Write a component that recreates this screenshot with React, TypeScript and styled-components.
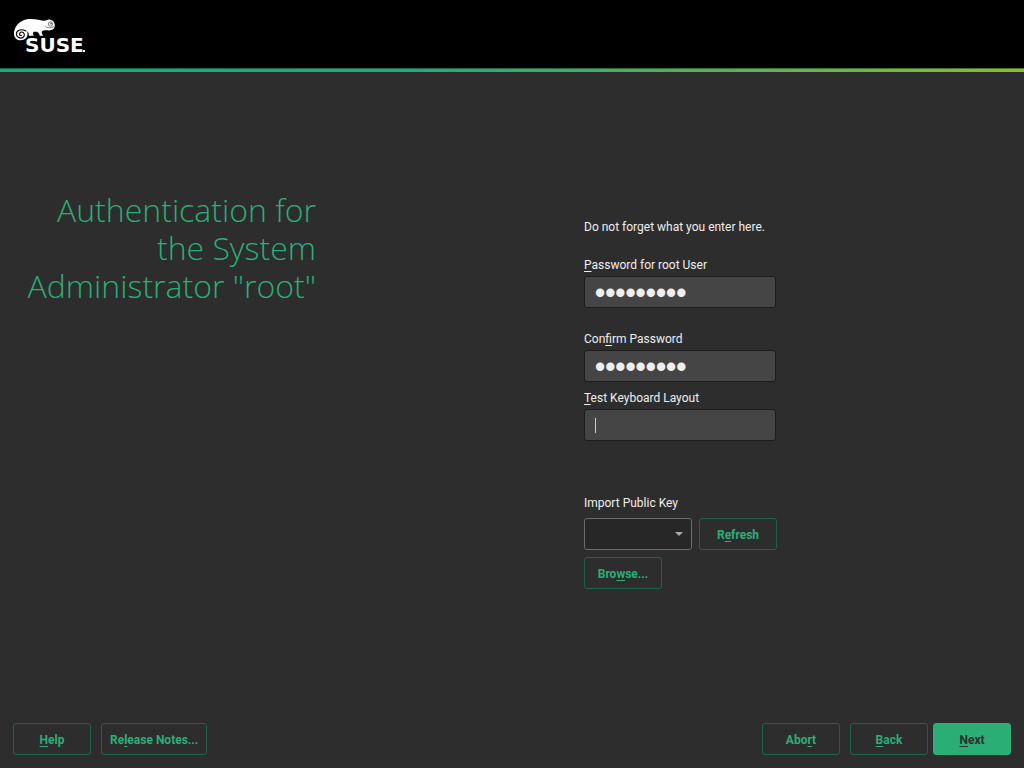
import React from "react";
import styled, { createGlobalStyle, css } from "styled-components";

const GlobalStyle = createGlobalStyle`
  *, *::before, *::after { box-sizing: border-box; }
  body {
    margin: 0;
    background: #2d2d2d;
    color: #eeeeee;
    font-family: Roboto, "Liberation Sans", sans-serif;
    font-size: 12px;
    line-height: 16px;
  }
`;

const Page = styled.div`
  display: flex;
  flex-direction: column;
  min-height: 100vh;
`;

const Header = styled.header`
  background: #000000;
  padding: 16px 12px 12px;
`;

const Logo = styled.svg`
  display: block;
  width: 80px;
  height: 40px;
`;

const Wordmark = styled.text`
  font: bold 20px "DejaVu Sans", sans-serif;
  fill: #ffffff;
`;

const Stripe = styled.div`
  height: 4px;
  border-top: 1px solid rgba(0, 0, 0, 0.4);
  background: linear-gradient(to right, #1fa67a 0%, #22a97c 40%, #84bf30 100%) border-box;
`;

const Main = styled.main`
  flex: 1;
  display: grid;
  grid-template-columns: minmax(300px, 336px) 1fr;
`;

const Title = styled.h1`
  margin: 0;
  padding: 119px 20px 0 24px;
  color: #2bae76;
  font: 350 32px/38px "Open Sans", Lato, sans-serif;
  font-variant-ligatures: none;
  text-align: right;
`;

const Form = styled.form`
  justify-self: center;
  width: 192px;
  padding-top: 147px;
`;

const Intro = styled.p`
  margin: 0 0 22px;
`;

const Field = styled.div<{ $gap: number }>`
  display: flex;
  flex-direction: column;
  gap: 3px;
  margin-bottom: ${({ $gap }) => $gap}px;
`;

const Hotkey = styled.span`
  text-decoration: underline;
  text-decoration-thickness: 1px;
  text-decoration-skip-ink: none;
  text-underline-offset: 2px;
`;

const InputFrame = styled.div<{ $caret?: boolean }>`
  position: relative;
  display: flex;
  ${({ $caret }) =>
    $caret &&
    css`
      &::after {
        content: "";
        position: absolute;
        left: 11px;
        top: 9px;
        width: 1px;
        height: 15px;
        background: #cccccc;
      }
    `}
`;

const TextInput = styled.input`
  width: 100%;
  height: 32px;
  padding: 0 10px;
  border: 1px solid #1c1c1c;
  border-radius: 3px;
  outline: none;
  background: #454545;
  color: #eeeeee;
  caret-color: transparent;
  font: 12px Roboto, sans-serif;

  &[type="password"] {
    padding-top: 2px;
    font: bold 29px "Liberation Sans", sans-serif;
  }
`;

const KeyRow = styled.div`
  display: flex;
  gap: 7px;
  margin: 7px 0;
`;

const SelectFrame = styled.div`
  position: relative;
  flex: none;
  width: 108px;

  &::after {
    content: "";
    position: absolute;
    right: 9px;
    top: 14px;
    border: 4px solid transparent;
    border-top-color: #aaaaaa;
    border-bottom: 0;
    pointer-events: none;
  }
`;

const Select = styled.select`
  appearance: none;
  display: block;
  width: 100%;
  height: 32px;
  padding: 0 24px 0 10px;
  border: 1px solid #6c6c6c;
  border-radius: 3px;
  outline: none;
  background: #272727;
  color: #eeeeee;
  font: 12px Roboto, sans-serif;
`;

const Button = styled.button<{ $primary?: boolean }>`
  flex: none;
  min-width: 78px;
  height: 32px;
  padding: 2px 8px 0;
  border: 1px solid ${({ $primary }) => ($primary ? "#2bae76" : "#1c6349")};
  border-radius: 3px;
  background: ${({ $primary }) => ($primary ? "#2bae76" : "transparent")};
  color: ${({ $primary }) => ($primary ? "#2d2d2d" : "#2bae76")};
  font: bold 12px/16px Roboto, sans-serif;
`;

const Footer = styled.footer`
  display: flex;
  justify-content: space-between;
  padding: 13px;
`;

const Group = styled.div<{ $gap: number }>`
  display: flex;
  gap: ${({ $gap }) => $gap}px;
`;

const SuseLogo = () => (
  <Logo viewBox="12 16 80 40" role="img" aria-label="SUSE">
    <path
      fill="#fff"
      d="M14 34C13.800 27 19 20.500 27 19.200C34 18.200 40 20.200 44.500 20.800C46.500 20.600 47.500 19.300 49.500 19.600C53 20.200 54.600 22 54.800 25C55 28.500 52.500 30.400 49 30.400C46 30.400 43.500 30 41.900 31.500C41.300 32.500 42 34 43.200 35.800L39.800 35.800C39.300 34 38.500 32.500 37 31.800L33.500 31.800C32.800 33 33 34 33.700 35.800L28.800 35.800C29 33.500 28.300 31.800 27 31.600C28.300 34.500 27.300 38 24 39.600C19.500 41.500 14.300 39.500 14 34Z"
    />
    <path
      fill="none"
      stroke="#000"
      strokeWidth="1.100"
      strokeLinecap="round"
      d="M26 31C20 28 16.300 31 16.400 34.300C16.700 38 22 39.400 24 36.400C25.300 33.800 22.800 31.200 20.600 32.200C18.800 33.200 19.300 35.900 21.300 35.400"
    />
    <circle cx="50.500" cy="24" r="2.200" fill="#fff" stroke="#000" strokeWidth="0.500" />
    <circle cx="51" cy="23.700" r="0.700" fill="#000" />
    <path fill="none" stroke="#000" strokeWidth="0.500" d="M45.500 26.500C48 28.300 51 28.300 54 26.500" />
    <Wordmark x="25" y="52">SUSE</Wordmark>
    <rect x="83" y="50" width="2" height="2" fill="#fff" />
  </Logo>
);

export default function App() {
  return (
    <Page>
      <GlobalStyle />
      <Header>
        <SuseLogo />
      </Header>
      <Stripe />
      <Main>
        <Title>Authentication for the System Administrator "root"</Title>
        <Form id="auth" onSubmit={(e) => e.preventDefault()}>
          <Intro>Do not forget what you enter here.</Intro>
          <Field $gap={23}>
            <label htmlFor="password"><Hotkey>P</Hotkey>assword for root User</label>
            <InputFrame>
              <TextInput id="password" type="password" defaultValue="linuxroot" />
            </InputFrame>
          </Field>
          <Field $gap={8}>
            <label htmlFor="confirm">Con<Hotkey>f</Hotkey>irm Password</label>
            <InputFrame>
              <TextInput id="confirm" type="password" defaultValue="linuxroot" />
            </InputFrame>
          </Field>
          <Field $gap={54}>
            <label htmlFor="layout"><Hotkey>T</Hotkey>est Keyboard Layout</label>
            <InputFrame $caret>
              <TextInput id="layout" type="text" />
            </InputFrame>
          </Field>
          <label htmlFor="key">Import Public Key</label>
          <KeyRow>
            <SelectFrame>
              <Select id="key" />
            </SelectFrame>
            <Button type="button">R<Hotkey>e</Hotkey>fresh</Button>
          </KeyRow>
          <Button type="button">Bro<Hotkey>w</Hotkey>se...</Button>
        </Form>
      </Main>
      <Footer>
        <Group $gap={10}>
          <Button type="button"><Hotkey>H</Hotkey>elp</Button>
          <Button type="button">Re<Hotkey>l</Hotkey>ease Notes...</Button>
        </Group>
        <Group $gap={5}>
          <Group $gap={10}>
            <Button type="button">Abo<Hotkey>r</Hotkey>t</Button>
            <Button type="button"><Hotkey>B</Hotkey>ack</Button>
          </Group>
          <Button type="submit" form="auth" $primary><Hotkey>N</Hotkey>ext</Button>
        </Group>
      </Footer>
    </Page>
  );
}
